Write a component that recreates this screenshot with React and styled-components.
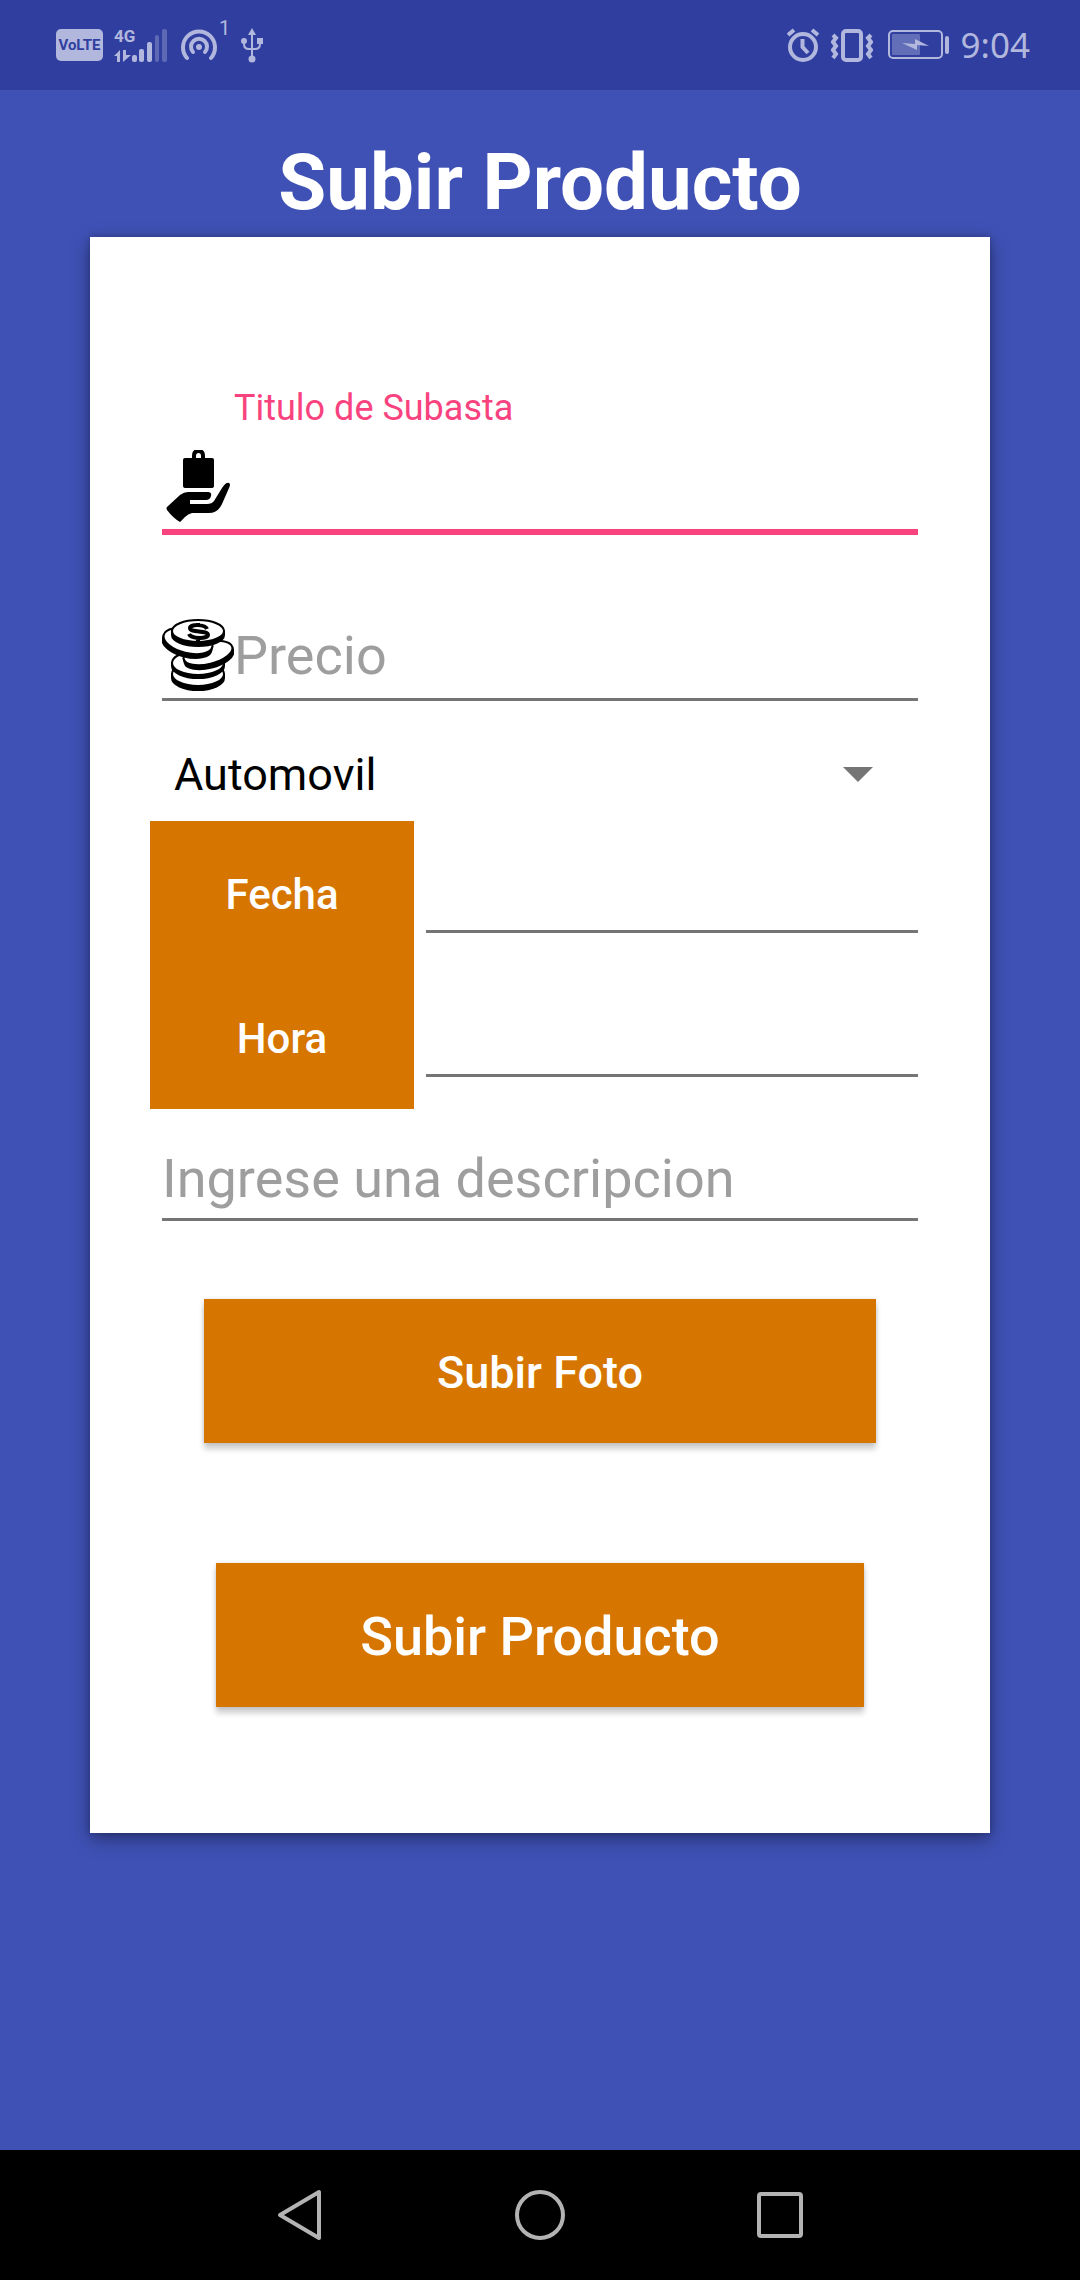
import React from "react";
import styled, { createGlobalStyle } from "styled-components";

const color = {
  primary: "#3f51b5",
  primaryDark: "#303f9f",
  accent: "#f9437f",
  action: "#d67600",
  line: "#757575",
  hint: "#9e9e9e",
  status: "#b2b7de",
  nav: "#b3b3b3",
};

const GlobalStyle = createGlobalStyle`
  *, *::before, *::after { box-sizing: border-box; }
  body {
    margin: 0;
    background: ${color.primary};
    font-family: Roboto, "Liberation Sans", sans-serif;
  }
  svg { display: block; flex: none; }
`;

const Screen = styled.div`
  display: flex;
  flex-direction: column;
  min-height: 100vh;
`;

const StatusBar = styled.header`
  display: flex;
  justify-content: space-between;
  align-items: center;
  height: 90px;
  padding: 0 50px 0 56px;
  background: ${color.primaryDark};
  color: ${color.status};
`;

const StatusGroup = styled.div`
  display: flex;
  align-items: center;
  gap: ${(p) => p.$gap}px;
`;

const VolteBadge = styled.span`
  display: flex;
  align-items: center;
  justify-content: center;
  width: 47px;
  height: 32px;
  border-radius: 5px;
  background: ${color.status};
  color: ${color.primaryDark};
  font-size: 15px;
  font-weight: 700;
  line-height: 20px;
`;

const HotspotGroup = styled.span`
  display: flex;
  align-items: flex-start;
`;

const HotspotCount = styled.span`
  height: 54px;
  font-size: 20px;
  line-height: 20px;
`;

const Clock = styled.time`
  font-family: "Noto Sans", Roboto, sans-serif;
  font-size: 35px;
  line-height: 42px;
`;

const Main = styled.main`
  flex: 1;
  padding: 47px 90px 60px;
`;

const Title = styled.h1`
  margin: 0 0 9px;
  color: #fff;
  font-size: 78px;
  font-weight: 700;
  line-height: 91px;
  text-align: center;
`;

const Card = styled.form`
  display: flex;
  flex-direction: column;
  padding: 150px 60px 126px;
  background: #fff;
  box-shadow: 0 6px 18px rgba(0, 0, 0, 0.38), 0 0 6px rgba(0, 0, 0, 0.2);
`;

const FloatingLabel = styled.label`
  margin: 0 12px 21px 84px;
  color: ${color.accent};
  font-size: 36px;
  line-height: 42px;
`;

const IconField = styled.div`
  display: flex;
  align-items: center;
  margin: 0 12px ${(p) => p.$after}px;
  padding-bottom: 7px;
  border-bottom: ${(p) => (p.$active ? `6px solid ${color.accent}` : `3px solid ${color.line}`)};
`;

const TextInput = styled.input`
  flex: 1;
  min-width: 0;
  height: 64px;
  padding: 0;
  border: 0;
  outline: 0;
  background: transparent;
  color: #000;
  font: 400 54px/62px Roboto, "Liberation Sans", sans-serif;
  &::placeholder { color: ${color.hint}; opacity: 1; }
`;

const SelectWrap = styled.div`
  position: relative;
  display: flex;
`;

const Select = styled.select`
  flex: 1;
  height: 94px;
  padding: 2px 84px 0 24px;
  border: 0;
  outline: 0;
  appearance: none;
  background: transparent;
  color: #000;
  font: 400 45px/54px Roboto, "Liberation Sans", sans-serif;
`;

const SelectArrow = styled.svg`
  position: absolute;
  top: 40px;
  right: 57px;
  pointer-events: none;
`;

const PickerRow = styled.div`
  display: grid;
  grid-template-columns: 264px 1fr;
  gap: 12px;
  padding-right: 12px;
`;

const Button = styled.button`
  height: 144px;
  padding: 2px 0 0;
  border: 0;
  border-radius: 0;
  background: ${color.action};
  color: #fff;
  font-family: inherit;
  font-size: ${(p) => p.$size}px;
  font-weight: 500;
`;

const RaisedButton = styled(Button)`
  margin: ${(p) => p.$before}px ${(p) => p.$inset}px 0;
  box-shadow: 0 6px 6px rgba(0, 0, 0, 0.2), 0 0 4px rgba(0, 0, 0, 0.12);
`;

const PickerInput = styled(TextInput)`
  height: 112px;
  border-bottom: 3px solid ${color.line};
`;

const Description = styled(TextInput)`
  flex: none;
  height: 74px;
  margin: 38px 12px 0;
  padding-bottom: 8px;
  border-bottom: 3px solid ${color.line};
`;

const NavBar = styled.nav`
  display: flex;
  justify-content: center;
  height: 130px;
  background: #000;
`;

const NavButton = styled.button`
  display: flex;
  align-items: center;
  justify-content: center;
  width: 240px;
  padding: 0;
  border: 0;
  background: transparent;
`;

const SignalIcon = () => (
  <svg width="56" height="36" viewBox="0 0 56 36" fill="currentColor">
    <text x="0" y="15" fontSize="17" fontWeight="700" fontFamily="Roboto, sans-serif">4G</text>
    <path d="M0 29 6 23V35H3V29ZM9 23H12V28H17L9 35Z" />
    <rect x="18" y="28" width="5" height="7" rx="2" />
    <rect x="25" y="22" width="5" height="13" rx="2" />
    <rect x="33" y="15" width="5" height="20" rx="2" />
    <rect x="41" y="8" width="4" height="27" rx="2" opacity="0.35" />
    <rect x="48" y="2" width="5" height="33" rx="2" opacity="0.35" />
  </svg>
);

const HotspotIcon = () => (
  <svg width="38" height="54" viewBox="0 0 38 54" fill="none" stroke="currentColor" strokeWidth="4" strokeLinecap="round">
    <path d="M6 40A16 16 0 1 1 30 40" />
    <path d="M12 34A8 8 0 1 1 24 34" />
    <circle cx="18" cy="29" r="3" fill="currentColor" stroke="none" />
  </svg>
);

const UsbIcon = () => (
  <svg width="24" height="36" viewBox="0 0 24 36" fill="none" stroke="currentColor" strokeWidth="2">
    <path d="M11 6V30M3 14V17Q3 22 8 22H14Q19 22 19 17V14" />
    <path d="M11 1 15 8H7Z" fill="currentColor" stroke="none" />
    <circle cx="11" cy="32" r="3.5" fill="currentColor" stroke="none" />
    <circle cx="3" cy="14" r="3" fill="currentColor" stroke="none" />
    <rect x="16" y="11" width="6" height="6" fill="currentColor" stroke="none" />
  </svg>
);

const AlarmIcon = () => (
  <svg width="34" height="36" viewBox="0 0 34 36" fill="none" stroke="currentColor" strokeWidth="4">
    <circle cx="17" cy="20" r="13" />
    <path d="M16.5 12V20L22 26" />
    <path d="M2 8 8 3M26 3 32 8" />
  </svg>
);

const VibrateIcon = () => (
  <svg width="42" height="36" viewBox="0 0 42 36" fill="none" stroke="currentColor" strokeWidth="4">
    <rect x="12" y="4" width="18" height="29" rx="3" />
    <path d="M2 8 5 11 2 15 5 19 2 23 5 27 2 31M40 8 37 11 40 15 37 19 40 23 37 27 40 31" />
  </svg>
);

const BatteryIcon = () => (
  <svg width="66" height="30" viewBox="-4 0 66 30" fill="currentColor">
    <rect x="1" y="1" width="53" height="27" rx="4" fill="none" stroke="currentColor" strokeWidth="2" />
    <rect x="4" y="4" width="28" height="21" rx="1" opacity="0.4" />
    <path d="M14 13 27 14V9L41 16 29 15V20Z" />
    <rect x="57" y="6" width="4" height="18" rx="2" />
  </svg>
);

const BagHandIcon = () => (
  <svg width="72" height="72" viewBox="0 0 72 72" aria-hidden="true">
    <path d="M32 10V6Q32 1 36.5 1T41 6V10" fill="none" stroke="#000" strokeWidth="4" />
    <path d="M23 8H50Q52 8 52 10V36Q52 38 49 38H24Q21 38 21 36V10Q21 8 23 8Z" />
    <path d="M5 57 18 45Q22 42 26 42H46Q50 42 49 46Q48 50 44 50H28V54H45Q50 54 52 51L60 38Q64 32 67 33Q69 34 67 38L60 54Q56 63 47 63H30Q26 64 23 67L18 72Q11 68 5 60Q4 58 5 57Z" />
  </svg>
);

const Coin = ({ x, y, rx, ry, depth, tilt = 0 }) => (
  <g transform={`rotate(${tilt} ${x} ${y})`} stroke="#000" strokeWidth="2">
    <path d={`M${x - rx} ${y}v${depth}a${rx} ${ry} 0 0 0 ${rx * 2} 0v${-depth}Z`} fill="#000" />
    <ellipse cx={x} cy={y} rx={rx} ry={ry} fill="#fff" />
  </g>
);

const CoinsIcon = () => (
  <svg width="72" height="72" viewBox="0 0 72 72" aria-hidden="true">
    <Coin x={36} y={55} rx={26} ry={12} depth={4} />
    <Coin x={36} y={44} rx={26} ry={12} depth={3} />
    <Coin x={46} y={34} rx={25} ry={11} depth={4} tilt={-14} />
    <Coin x={26} y={22} rx={25} ry={12} depth={4} tilt={14} />
    <Coin x={36} y={12} rx={26} ry={11} depth={4} />
    <path
      d="M45 10C43 5 28 5 28 9C28 14 46 11 46 16C46 20 29 20 27 15M36 4V7M36 18V22"
      fill="none"
      stroke="#000"
      strokeWidth="4"
    />
  </svg>
);

export default function App() {
  return (
    <Screen>
      <GlobalStyle />
      <StatusBar>
        <StatusGroup $gap={11}>
          <VolteBadge>VoLTE</VolteBadge>
          <SignalIcon />
          <HotspotGroup>
            <HotspotIcon />
            <HotspotCount>1</HotspotCount>
          </HotspotGroup>
          <UsbIcon />
        </StatusGroup>
        <StatusGroup $gap={11}>
          <AlarmIcon />
          <VibrateIcon />
          <BatteryIcon />
          <Clock>9:04</Clock>
        </StatusGroup>
      </StatusBar>

      <Main>
        <Title>Subir Producto</Title>
        <Card onSubmit={(e) => e.preventDefault()}>
          <FloatingLabel htmlFor="titulo">Titulo de Subasta</FloatingLabel>
          <IconField $active $after={84}>
            <BagHandIcon />
            <TextInput id="titulo" type="text" />
          </IconField>
          <IconField $after={26}>
            <CoinsIcon />
            <TextInput type="text" inputMode="decimal" placeholder="Precio" aria-label="Precio" />
          </IconField>
          <SelectWrap>
            <Select aria-label="Categoria" defaultValue="Automovil">
              <option>Automovil</option>
            </Select>
            <SelectArrow width="30" height="15" viewBox="0 0 30 15" aria-hidden="true">
              <path d="M0 0H30L15 15Z" fill={color.line} />
            </SelectArrow>
          </SelectWrap>
          <PickerRow>
            <Button type="button" $size={42}>Fecha</Button>
            <PickerInput type="text" aria-label="Fecha" />
          </PickerRow>
          <PickerRow>
            <Button type="button" $size={42}>Hora</Button>
            <PickerInput type="text" aria-label="Hora" />
          </PickerRow>
          <Description type="text" placeholder="Ingrese una descripcion" aria-label="Ingrese una descripcion" />
          <RaisedButton type="button" $size={45} $before={78} $inset={54}>Subir Foto</RaisedButton>
          <RaisedButton type="submit" $size={54} $before={120} $inset={66}>Subir Producto</RaisedButton>
        </Card>
      </Main>

      <NavBar>
        <NavButton type="button" aria-label="Atras">
          <svg width="50" height="54" viewBox="0 0 50 54" fill="none" stroke={color.nav} strokeWidth="4" strokeLinejoin="round">
            <path d="M5 27 44 4V50Z" />
          </svg>
        </NavButton>
        <NavButton type="button" aria-label="Inicio">
          <svg width="50" height="50" viewBox="0 0 50 50" fill="none" stroke={color.nav} strokeWidth="4">
            <circle cx="25" cy="25" r="23" />
          </svg>
        </NavButton>
        <NavButton type="button" aria-label="Recientes">
          <svg width="46" height="46" viewBox="0 0 46 46" fill="none" stroke={color.nav} strokeWidth="4">
            <rect x="2" y="2" width="42" height="42" rx="2" />
          </svg>
        </NavButton>
      </NavBar>
    </Screen>
  );
}
